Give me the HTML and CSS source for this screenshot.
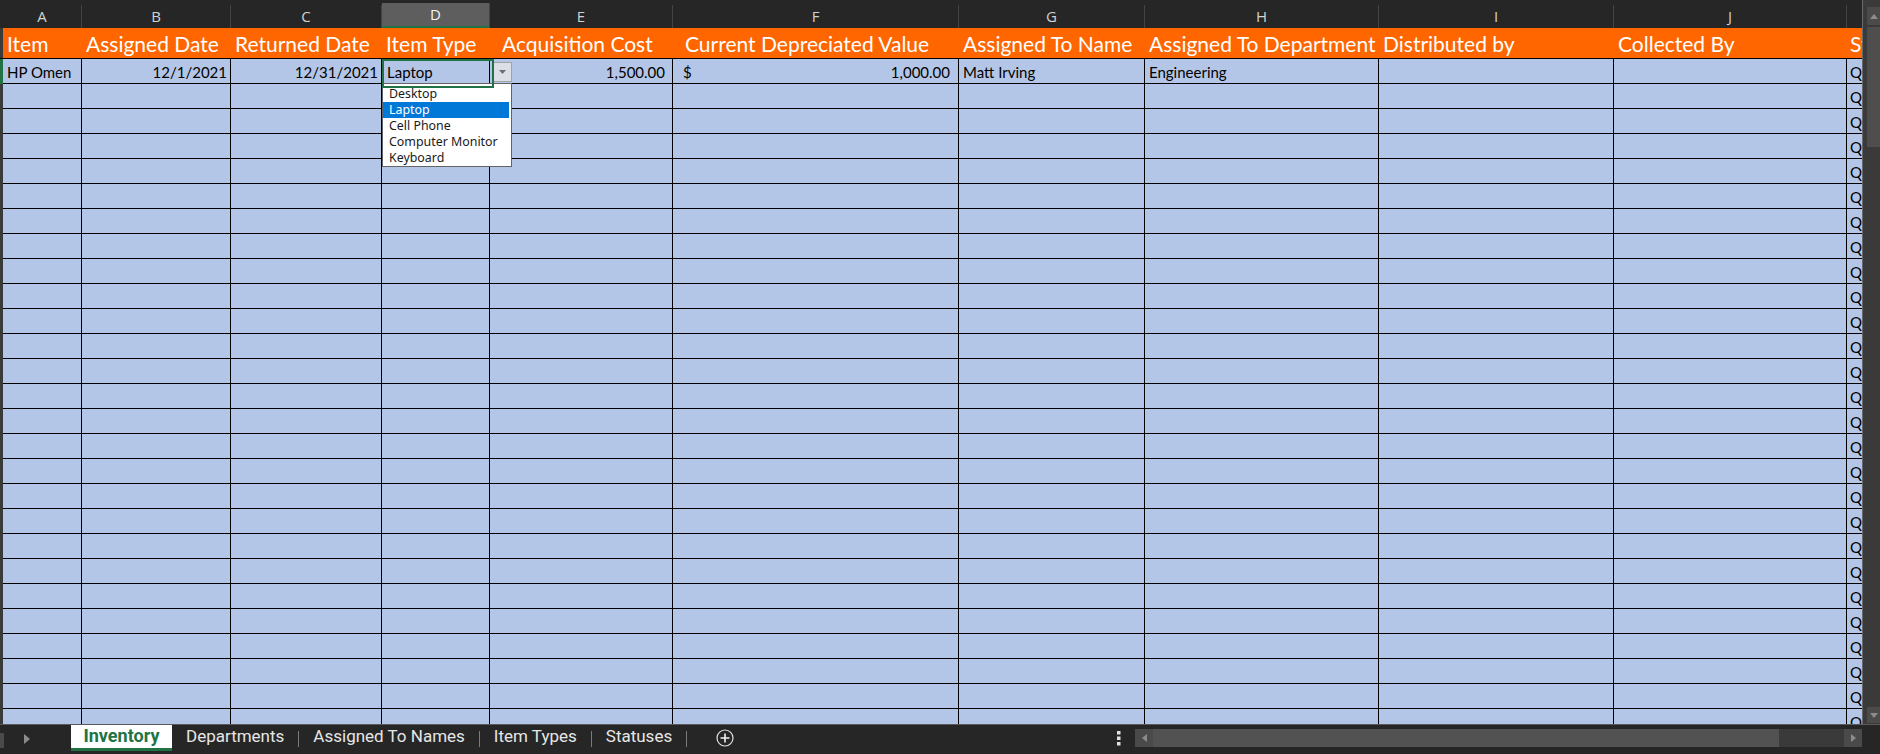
FILE: index.html
```html
<!DOCTYPE html>
<html lang="en">
<head>
  <meta charset="UTF-8" />
  <title>Inventory</title>
  <link rel="stylesheet" href="styles.css">
</head>
<body>
  <div class="app">
    <div class="main">
      <div class="sheet">
        <!-- column letters -->
        <div class="row letters">
          <div class="gut"></div>
          <div class="col">A</div>
          <div class="col">B</div>
          <div class="col">C</div>
          <div class="col sel">D</div>
          <div class="col">E</div>
          <div class="col">F</div>
          <div class="col">G</div>
          <div class="col">H</div>
          <div class="col">I</div>
          <div class="col">J</div>
          <div class="col last"></div>
        </div>

        <!-- table header -->
        <div class="row head">
          <div class="gut"></div>
          <div class="hd">Item</div>
          <div class="hd">Assigned Date</div>
          <div class="hd">Returned Date</div>
          <div class="hd">Item Type</div>
          <div class="hd ind">Acquisition Cost</div>
          <div class="hd ind">Current Depreciated Value</div>
          <div class="hd">Assigned To Name</div>
          <div class="hd">Assigned To Department</div>
          <div class="hd">Distributed by</div>
          <div class="hd">Collected By</div>
          <div class="hd k">Status</div>
        </div>

        <!-- first record -->
        <div class="row data">
          <div class="gut on"></div>
          <div class="c">HP Omen</div>
          <div class="c r">12/1/2021</div>
          <div class="c r">12/31/2021</div>
          <div class="c pick">
            Laptop
            <span class="drop-btn">
              <svg width="7" height="4" viewBox="0 0 7 4"><path d="M0 0h7L3.5 4z" fill="#6e6e6e"/></svg>
            </span>
            <ul class="list">
              <li>Desktop</li>
              <li class="hl">Laptop</li>
              <li>Cell Phone</li>
              <li>Computer Monitor</li>
              <li>Keyboard</li>
            </ul>
          </div>
          <div class="c r acct">1,500.00</div>
          <div class="c money"><span>$</span><span>1,000.00</span></div>
          <div class="c">Matt Irving</div>
          <div class="c">Engineering</div>
          <div class="c"></div>
          <div class="c"></div>
          <div class="c q">Q</div>
        </div>

        <div id="rows"></div>
      </div>

      <div class="vscroll">
        <div class="vs-btn up">
          <svg width="8" height="5" viewBox="0 0 8 5"><path d="M0 5h8L4 0z" fill="#8c8c8c"/></svg>
        </div>
        <div class="vs-thumb"></div>
        <div class="vs-track"></div>
        <div class="vs-btn down">
          <svg width="8" height="5" viewBox="0 0 8 5"><path d="M0 0h8L4 5z" fill="#8c8c8c"/></svg>
        </div>
      </div>
    </div>

    <!-- sheet tabs -->
    <div class="tabbar">
      <div class="tabs">
        <div class="nub"></div>
        <svg class="nav" width="6" height="10" viewBox="0 0 6 10"><path d="M0 0l6 5-6 5z" fill="#8c8c8c"/></svg>
        <div class="tab active">Inventory</div>
        <div class="tab">Departments</div>
        <div class="sep"></div>
        <div class="tab">Assigned To Names</div>
        <div class="sep"></div>
        <div class="tab">Item Types</div>
        <div class="sep"></div>
        <div class="tab">Statuses</div>
        <div class="sep"></div>
      </div>
      <svg class="plus" width="18" height="18" viewBox="0 0 18 18">
        <circle cx="9" cy="9" r="8" fill="none" stroke="#e2e2e2" stroke-width="1.2"/>
        <path d="M9 4.5v9M4.5 9h9" stroke="#f2f2f2" stroke-width="1.6"/>
      </svg>
      <svg class="dots" width="4" height="16" viewBox="0 0 4 16">
        <rect x="0" y="1" width="3.5" height="3.5" fill="#e0e0e0"/>
        <rect x="0" y="6.5" width="3.5" height="3.5" fill="#e0e0e0"/>
        <rect x="0" y="12" width="3.5" height="3.5" fill="#e0e0e0"/>
      </svg>
      <div class="hscroll">
        <div class="hs-btn">
          <svg width="5" height="8" viewBox="0 0 5 8"><path d="M5 0v8L0 4z" fill="#8c8c8c"/></svg>
        </div>
        <div class="hs-thumb"></div>
        <div class="hs-track"></div>
        <div class="hs-btn">
          <svg width="5" height="8" viewBox="0 0 5 8"><path d="M0 0v8l5-4z" fill="#8c8c8c"/></svg>
        </div>
      </div>
    </div>
  </div>

  <script>
    // empty rows below the first record
    const rows = document.getElementById("rows");
    for (let i = 0; i < 26; i++) {
      rows.insertAdjacentHTML("beforeend",
        '<div class="row data"><div class="gut"></div>' +
        '<div class="c"></div>'.repeat(10) +
        '<div class="c q">Q</div></div>');
    }
  </script>
</body>
</html>
```

FILE: styles.css
```css
:root {
  --cols: 3px 79px 149px 151px 108px 183px 286px 186px 234px 235px 233px 15px;
}
* {
  box-sizing: border-box;
}
body {
  margin: 0;
  background: #262626;
  overflow: hidden;
}
.app {
  width: 1880px;
  height: 754px;
  display: flex;
  flex-direction: column;
}
.main {
  display: flex;
  height: 724px;
}
.sheet {
  width: 1862px;
  overflow: hidden;
}
.row {
  display: grid;
  grid-template-columns: var(--cols);
}
.gut {
  background: #3a3a3a;
}
.gut.on {
  background: #217346;
}

/* column letters */
.letters {
  height: 28px;
  background: #262626;
}
.letters .gut {
  background: #262626;
}
.letters .col {
  margin-top: 5px;
  border-right: 1px solid #444;
  color: #d2d2d2;
  font: 15px/22px "Open Sans", sans-serif;
  text-align: center;
}
.letters .col.sel {
  margin-top: 3px;
  background: #5e5e5e;
  border-bottom: 2px solid #217346;
  color: #f2f2f2;
  line-height: 22px;
}
.letters .col.last {
  border-right: none;
}

/* orange header */
.head {
  height: 31px;
  background: #ff6600;
  border-bottom: 1px solid #000;
}
.head .gut {
  background: #3a3a3a;
}
.hd {
  display: flex;
  align-items: flex-end;
  padding: 0 0 2px 4px;
  color: #fff;
  font: 21px/25px Lato, sans-serif;
  white-space: nowrap;
  overflow: hidden;
}
.hd.ind {
  padding-left: 12px;
}
.hd.k {
  padding-left: 3px;
}

/* cells */
.data {
  height: 25px;
}
.c {
  display: flex;
  align-items: flex-end;
  padding: 0 4px 2px;
  background: #b4c6e7;
  border-right: 1px solid #000;
  border-bottom: 1px solid #000;
  color: #000;
  font: 15px/18px Lato, sans-serif;
  white-space: nowrap;
  overflow: hidden;
}
.c.r {
  justify-content: flex-end;
  padding-right: 3px;
}
.c.acct {
  padding-right: 7px;
}
.c.money {
  justify-content: space-between;
  padding: 0 8px 2px 10px;
}
.c.q {
  border-right: none;
  padding-left: 3px;
}

/* selected cell with validation list */
.c.pick {
  position: relative;
  overflow: visible;
  z-index: 2;
  padding-left: 5px;
}
.c.pick::after {
  content: "";
  position: absolute;
  left: 0;
  top: 0;
  width: 108px;
  height: 25px;
  border: 2px solid #217346;
}
.drop-btn {
  position: absolute;
  left: 110px;
  top: 3px;
  width: 20px;
  height: 20px;
  display: flex;
  align-items: center;
  justify-content: center;
  background: #dcdfe5;
  border: 1px solid #a3a3a3;
}
.list {
  position: absolute;
  left: 0;
  top: 24px;
  width: 130px;
  margin: 0;
  padding: 2px 0 0;
  list-style: none;
  background: #fff;
  border: 1px solid #646464;
  font: 12.4px/16px "Noto Sans", sans-serif;
  color: #1a1a1a;
}
.list li {
  padding-left: 6px;
  margin-right: 2px;
  height: 16px;
}
.list li.hl {
  background: #0078d7;
  color: #fff;
}

/* vertical scrollbar */
.vscroll {
  width: 18px;
  display: flex;
  flex-direction: column;
  padding: 7px 0 1px 4px;
  background: #3a3a3a;
  border-left: 1px solid #6a6a6a;
}
.vs-btn {
  height: 18px;
  display: flex;
  align-items: center;
  justify-content: center;
  background: #4b4b4b;
}
.vs-btn.down {
  height: 16px;
}
.vs-thumb {
  height: 120px;
  margin-top: 2px;
  background: #4e4e4e;
}
.vs-track {
  flex: 1;
}

/* sheet tabs */
.tabbar {
  height: 30px;
  display: flex;
  align-items: flex-start;
  border-top: 1px solid #5a5a5a;
  background: #262626;
  font-family: Roboto, sans-serif;
  font-size: 17px;
}
.tabs {
  width: 716px;
  display: flex;
  align-items: flex-start;
  overflow: hidden;
}
.nub {
  width: 4px;
  height: 15px;
  margin-top: 8px;
  background: #4a4a4a;
}
.nav {
  margin: 9px 0 0 20px;
}
.tab {
  height: 26px;
  padding: 0 14px;
  line-height: 23px;
  color: #e6e6e6;
  white-space: nowrap;
}
.tab.active {
  width: 101px;
  margin-left: 41px;
  padding: 0;
  text-align: center;
  background: #fff;
  border-bottom: 3px solid #217346;
  color: #217346;
  font-size: 18px;
  font-weight: bold;
  line-height: 22px;
}
.sep {
  width: 1px;
  height: 16px;
  margin-top: 6px;
  background: #7a7a7a;
}
.plus {
  margin-top: 4px;
}
.dots {
  margin: 5px 0 0 383px;
}
.hscroll {
  width: 727px;
  height: 18px;
  margin: 4px 0 0 14px;
  display: flex;
  background: #3a3a3a;
}
.hs-btn {
  width: 18px;
  display: flex;
  align-items: center;
  justify-content: center;
  background: #4a4a4a;
}
.hs-thumb {
  width: 626px;
  background: #525252;
}
.hs-track {
  flex: 1;
}
```
